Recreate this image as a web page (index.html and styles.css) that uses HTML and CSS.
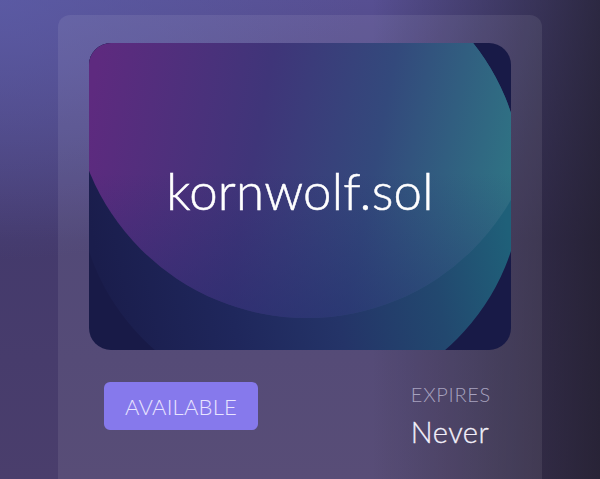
FILE: index.html
```html
<!DOCTYPE html>
<html lang="en">
<head>
<meta charset="utf-8">
<title>kornwolf.sol</title>
<link rel="stylesheet" href="styles.css">
</head>
<body>
<main class="page">
  <section class="card">
    <div class="art">
      <svg class="art-bg" viewBox="0 0 422 307" width="422" height="307" aria-hidden="true">
        <defs>
          <clipPath id="orb">
            <circle cx="211" cy="139" r="222"/>
            <rect x="0" y="0" width="211" height="139"/>
          </clipPath>
          <linearGradient id="back" gradientUnits="userSpaceOnUse" x1="20" y1="280" x2="422" y2="200">
            <stop offset="0" stop-color="#1a1d4c"/>
            <stop offset="0.3" stop-color="#1f275c"/>
            <stop offset="0.55" stop-color="#243468"/>
            <stop offset="0.8" stop-color="#22486f"/>
            <stop offset="1" stop-color="#1f6079"/>
          </linearGradient>
          <linearGradient id="front" gradientUnits="userSpaceOnUse" x1="0" y1="60" x2="422" y2="140">
            <stop offset="0" stop-color="#5e2a7f"/>
            <stop offset="0.4" stop-color="#3f3579"/>
            <stop offset="0.68" stop-color="#33497c"/>
            <stop offset="1" stop-color="#2f7384"/>
          </linearGradient>
          <linearGradient id="shade" gradientUnits="userSpaceOnUse" x1="0" y1="130" x2="0" y2="275">
            <stop offset="0" stop-color="#22286a" stop-opacity="0"/>
            <stop offset="1" stop-color="#22286a" stop-opacity="0.5"/>
          </linearGradient>
        </defs>
        <rect width="422" height="307" fill="#181a47"/>
        <g clip-path="url(#orb)">
          <rect width="422" height="307" fill="url(#back)"/>
          <circle cx="218" cy="40" r="235" fill="url(#front)"/>
          <circle cx="218" cy="40" r="235" fill="url(#shade)"/>
        </g>
      </svg>
      <h1 class="name">kornwolf.sol</h1>
    </div>
    <div class="meta">
      <span class="badge">AVAILABLE</span>
      <div class="expiry">
        <span class="label">EXPIRES</span>
        <span class="value">Never</span>
      </div>
    </div>
  </section>
</main>
</body>
</html>
```

FILE: styles.css
```css
html, body {
  margin: 0;
  padding: 0;
}

body {
  width: 600px;
  height: 479px;
  overflow: hidden;
  font-family: "Lato", "Open Sans", sans-serif;
  background:
    radial-gradient(ellipse 360px 260px at 0% 0%, rgba(92, 94, 170, 0.7) 0%, rgba(92, 94, 170, 0) 100%),
    linear-gradient(90deg, rgba(26, 24, 32, 0) 0%, rgba(26, 24, 32, 0) 62%, rgba(26, 24, 32, 0.7) 100%),
    linear-gradient(180deg, #574f92 0%, #443a6c 50%, #4a3e6c 100%);
}

.page {
  padding: 15px 58px 0;
}

.card {
  box-sizing: border-box;
  height: 464px;
  padding: 28px 31px 0;
  border-radius: 12px 12px 0 0;
  background: rgba(255, 255, 255, 0.08);
}

.art {
  display: grid;
  height: 307px;
  border-radius: 22px;
  overflow: hidden;
}

.art-bg,
.name {
  grid-area: 1 / 1;
}

.art-bg {
  display: block;
  width: 100%;
  height: 100%;
}

.name {
  margin: 0;
  align-self: center;
  justify-self: center;
  padding-bottom: 12px;
  font-family: "Lato", sans-serif;
  font-weight: 300;
  font-size: 51px;
  line-height: 60px;
  color: #ffffff;
  letter-spacing: 0.2px;
  -webkit-text-stroke: 0.5px #ffffff;
}

.meta {
  display: flex;
  justify-content: space-between;
  align-items: flex-start;
  margin-top: 32px;
  padding: 0 20px 0 15px;
}

.badge {
  display: flex;
  align-items: center;
  justify-content: center;
  width: 154px;
  height: 48px;
  border-radius: 6px;
  background: #8679ec;
  color: #e8e4ff;
  font-size: 22px;
  font-weight: 300;
  letter-spacing: 0.2px;
}

.expiry {
  display: flex;
  flex-direction: column;
  gap: 9px;
  padding-top: 0;
}

.label {
  font-size: 20px;
  line-height: 24px;
  font-weight: 300;
  letter-spacing: 0.7px;
  color: #a7a2bf;
}

.value {
  font-size: 29px;
  line-height: 34px;
  font-weight: 300;
  letter-spacing: 0.5px;
  color: #f2f0fa;
  -webkit-text-stroke: 0.3px #f2f0fa;
}
```
